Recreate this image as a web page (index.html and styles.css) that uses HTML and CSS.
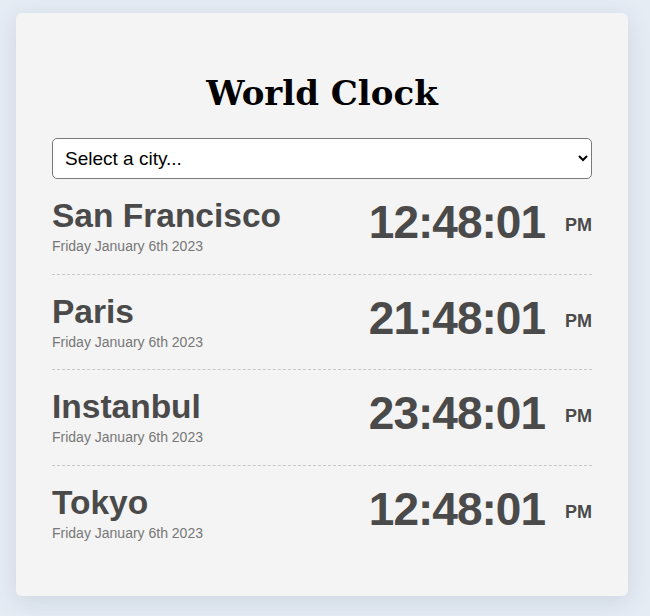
FILE: index.html
```html
<!DOCTYPE html>
<html lang="en">
<head>
<meta charset="utf-8">
<title>World Clock</title>
<link rel="stylesheet" href="styles.css">
</head>
<body>
<div class="page">
  <main class="card">
    <h1 class="title">World Clock</h1>
    <select class="city-select">
      <option>Select a city...</option>
    </select>
    <ul class="clock-list">
      <li class="clock-row">
        <div class="place">
          <h2 class="city">San Francisco</h2>
          <div class="date">Friday January 6th 2023</div>
        </div>
        <div class="time">12:48:01<span class="ampm">PM</span></div>
      </li>
      <li class="clock-row">
        <div class="place">
          <h2 class="city">Paris</h2>
          <div class="date">Friday January 6th 2023</div>
        </div>
        <div class="time">21:48:01<span class="ampm">PM</span></div>
      </li>
      <li class="clock-row">
        <div class="place">
          <h2 class="city">Instanbul</h2>
          <div class="date">Friday January 6th 2023</div>
        </div>
        <div class="time">23:48:01<span class="ampm">PM</span></div>
      </li>
      <li class="clock-row">
        <div class="place">
          <h2 class="city">Tokyo</h2>
          <div class="date">Friday January 6th 2023</div>
        </div>
        <div class="time">12:48:01<span class="ampm">PM</span></div>
      </li>
    </ul>
  </main>
</div>
</body>
</html>
```

FILE: styles.css
```css
* { box-sizing: border-box; }
html, body { margin: 0; height: 100%; }
body {
  background: #e5ecf4;
  font-family: "Liberation Sans", Arial, sans-serif;
}
.page {
  padding: 13px 0 0 16px;
}
.card {
  width: 612px;
  background: #f4f4f4;
  border-radius: 6px;
  box-shadow: 0 6px 24px rgba(60, 80, 110, 0.14);
  padding: 36px 36px 36px;
}
.title {
  margin: 24px 0 25px;
  text-align: center;
  font-family: "DejaVu Serif", Georgia, serif;
  font-weight: bold;
  font-size: 34px;
  line-height: 40px;
  color: #000;
}
.city-select {
  display: block;
  width: 100%;
  height: 41px;
  padding: 0 8px;
  font-family: "Liberation Sans", Arial, sans-serif;
  font-size: 19px;
  color: #000;
  background: #fff;
  border: 1px solid #7a7a7a;
  border-radius: 5px;
}
.clock-list {
  list-style: none;
  margin: 0;
  padding: 0;
}
.clock-row {
  display: flex;
  justify-content: space-between;
  align-items: flex-start;
  padding: 18px 0 19.5px;
  border-bottom: 1px dashed #c8c8c8;
}
.clock-row:last-child { border-bottom: none; }
.city {
  margin: 0;
  font-size: 33.5px;
  line-height: 37px;
  font-weight: bold;
  color: #4a4a4a;
}
.date {
  margin-top: 4px;
  font-size: 14px;
  line-height: 16px;
  color: #777;
}
.time {
  display: flex;
  align-items: baseline;
  margin-top: 2px;
  font-size: 46px;
  line-height: 46px;
  font-weight: bold;
  color: #4a4a4a;
  letter-spacing: -1px;
}
.ampm {
  font-size: 18px;
  line-height: 18px;
  letter-spacing: 0;
  margin-left: 20px;
  position: relative;
  top: -7px;
}
```
